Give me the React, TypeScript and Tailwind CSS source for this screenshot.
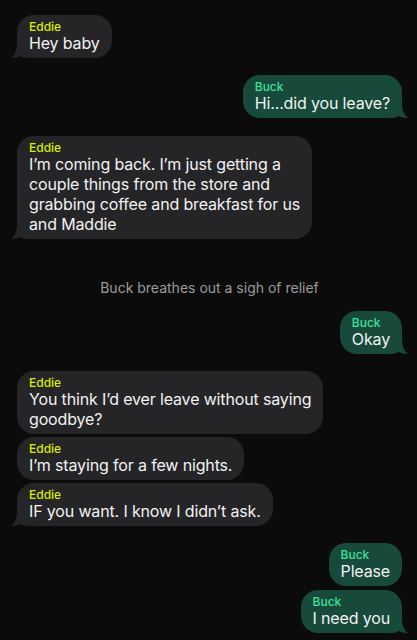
import React from "react";

type Msg =
  | { kind: "msg"; from: "Eddie" | "Buck"; lines: string[]; tail?: boolean; mt: string }
  | { kind: "note"; text: string; mt: string };

const messages: Msg[] = [
  { kind: "msg", from: "Eddie", lines: ["Hey baby"], tail: true, mt: "mt-[15px]" },
  { kind: "msg", from: "Buck", lines: ["Hi...did you leave?"], tail: true, mt: "mt-[17px]" },
  {
    kind: "msg",
    from: "Eddie",
    lines: [
      "I’m coming back. I’m just getting a",
      "couple things from the store and",
      "grabbing coffee and breakfast for us",
      "and Maddie",
    ],
    tail: true,
    mt: "mt-[18px]",
  },
  { kind: "note", text: "Buck breathes out a sigh of relief", mt: "mt-[39px]" },
  { kind: "msg", from: "Buck", lines: ["Okay"], tail: true, mt: "mt-[13px]" },
  {
    kind: "msg",
    from: "Eddie",
    lines: ["You think I’d ever leave without saying", "goodbye?"],
    mt: "mt-[17px]",
  },
  { kind: "msg", from: "Eddie", lines: ["I’m staying for a few nights."], mt: "mt-[3px]" },
  { kind: "msg", from: "Eddie", lines: ["IF you want. I know I didn’t ask."], tail: true, mt: "mt-[3px]" },
  { kind: "msg", from: "Buck", lines: ["Please"], mt: "mt-[17px]" },
  { kind: "msg", from: "Buck", lines: ["I need you"], tail: true, mt: "mt-[4px]" },
];

const Tail = ({ color, right }: { color: string; right?: boolean }) => (
  <svg
    width="20"
    height="20"
    viewBox="0 0 20 20"
    className={`absolute bottom-0 ${right ? "-right-[6px] scale-x-[-1]" : "-left-[6px]"}`}
  >
    <path
      d="M6 0 H20 V20 H16 C13 20 11 19.2 9.5 17.8 C7 19.6 3.5 20 0 20 C4 17 6 12 6 6 Z"
      fill={color}
    />
  </svg>
);

const Bubble = ({ m }: { m: Extract<Msg, { kind: "msg" }> }) => {
  const isBuck = m.from === "Buck";
  const bg = isBuck ? "#174a3a" : "#252527";
  return (
    <div className={`flex ${isBuck ? "justify-end" : "justify-start"} ${m.mt}`}>
      <div
        className={`relative rounded-[17px] px-3 pt-[5px] pb-[5px] ${
          isBuck ? "bg-[#174a3a]" : "bg-[#252527]"
        }`}
      >
        {m.tail && <Tail color={bg} right={isBuck} />}
        <div className="relative">
          <div
            className={`text-[12px] leading-[13px] font-medium ${
              isBuck ? "text-[#3ee29b]" : "text-[#d6ee00]"
            }`}
          >
            {m.from}
          </div>
          <div className="text-[16px] leading-5 tracking-[-0.15px] text-[#f2f2f2] whitespace-nowrap">
            {m.lines.map((l, i) => (
              <div key={i}>{l}</div>
            ))}
          </div>
        </div>
      </div>
    </div>
  );
};

export default function App() {
  return (
    <div
      className="min-h-[640px] w-full bg-[#0b0b0b] pl-[17px] pr-[15px] pb-4 overflow-hidden"
      style={{ fontFamily: "Inter, 'Noto Sans', sans-serif" }}
    >
      <div className="flex flex-col">
        {messages.map((m, i) =>
          m.kind === "note" ? (
            <div key={i} className={`${m.mt} text-center text-[14px] leading-5 text-[#9b9b9b]`}>
              {m.text}
            </div>
          ) : (
            <Bubble key={i} m={m} />
          )
        )}
      </div>
    </div>
  );
}
